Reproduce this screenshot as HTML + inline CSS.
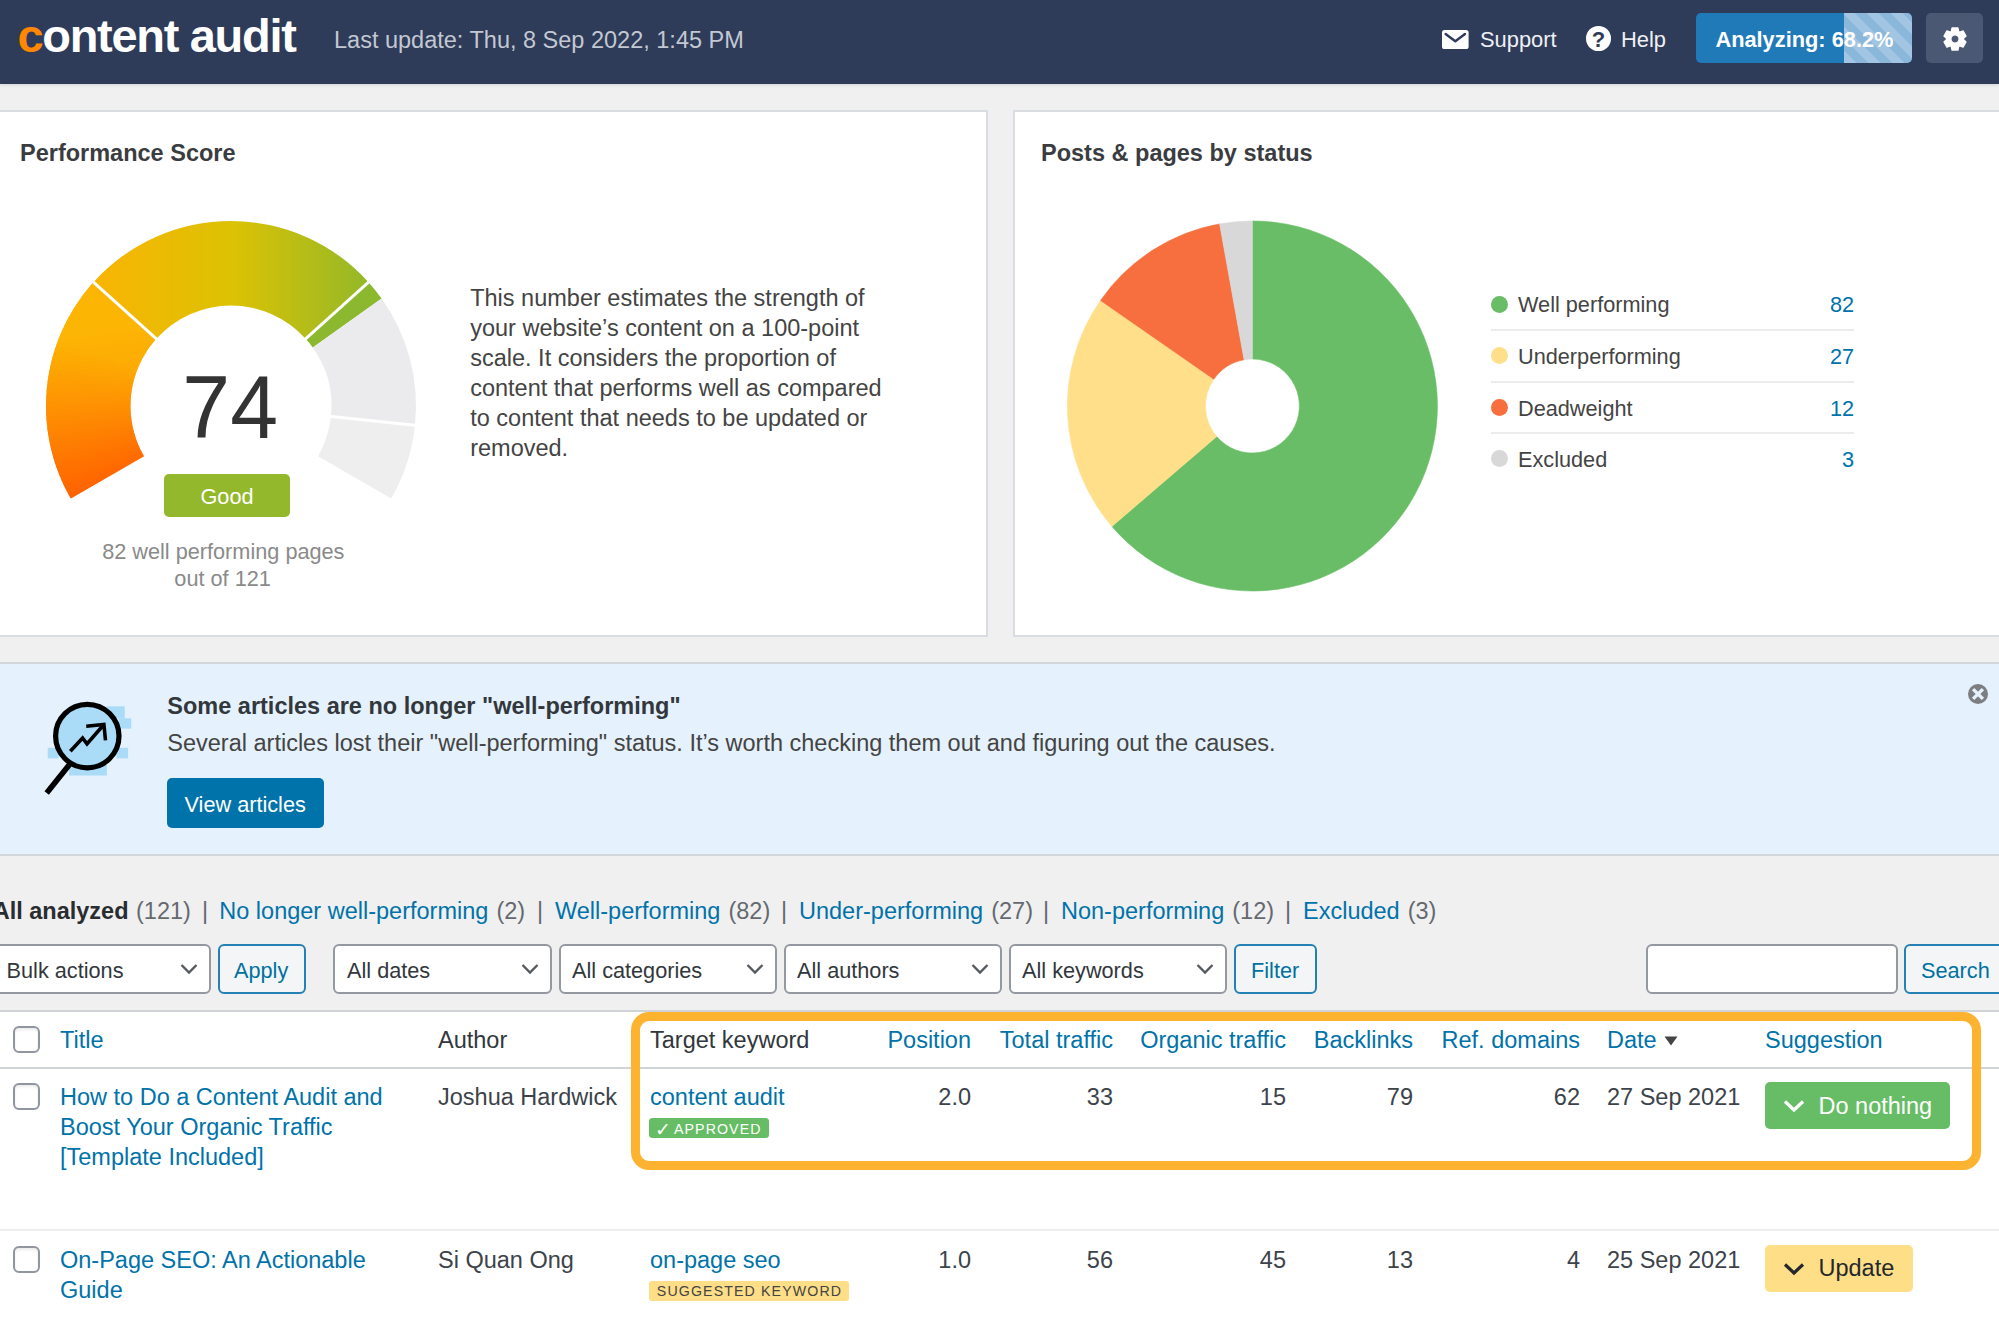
<!DOCTYPE html>
<html lang="en"><head><meta charset="utf-8"><title>Content Audit</title>
<style>
*{box-sizing:border-box;margin:0;padding:0}
html,body{width:1999px;height:1323px;overflow:hidden;background:#f0f0f1}
body{font-family:"Liberation Sans",Arial,Helvetica,sans-serif;position:relative;color:#3c434a}
.t{position:absolute;white-space:nowrap}
.abs{position:absolute}
a{color:#0073aa;text-decoration:none;margin-right:1.5px}
.blue{color:#0073aa}
.card{position:absolute;background:#fff;border:2px solid #d9dce1}
.sel{position:absolute;background:#fff;border:2px solid #9499a1;border-radius:6px;height:50px;top:944px}
.btn{position:absolute;background:#f3f5f6;border:2px solid #2580b3;border-radius:6px;height:50px;top:944px;color:#0071a1}
.cb{position:absolute;width:27px;height:27px;border:2px solid #9095a0;border-radius:6px;background:#fff;left:12.5px;box-shadow:inset 0 2px 3px rgba(0,0,0,.08)}
.hl{position:absolute;height:2px;background:#e2e4e7;left:0;width:1999px}
</style></head><body>
<div class="abs" style="left:0;top:0;width:1999px;height:84px;background:#2e3b59;box-shadow:0 1px 3px rgba(0,0,0,.12)"></div>
<div class="t " style="top:7px;font-size:47px;line-height:57px;color:#fff;font-weight:bold;left:17.40px;letter-spacing:-1.3px;"><span style="color:#ff8800">c</span>ontent audit</div>
<div class="t " style="top:25px;font-size:23.5px;line-height:30px;color:#c3c8d2;left:334.00px;">Last update: Thu, 8 Sep 2022, 1:45 PM</div>
<svg class="abs" style="left:1441.9px;top:29.8px" width="27" height="20" viewBox="0 0 27 20"><rect x="0" y="0" width="26.6" height="19" rx="2.6" fill="#fff"/><path d="M3.6,4 L13.3,11.3 L23,4" fill="none" stroke="#2e3b59" stroke-width="2.4" stroke-linecap="round" stroke-linejoin="round"/></svg>
<div class="t " style="top:25px;font-size:21.9px;line-height:29px;color:#eef0f4;left:1480.00px;">Support</div>
<div class="abs" style="left:1586.2px;top:26.2px;width:24.6px;height:24.6px;border-radius:50%;background:#fff"></div><div class="t " style="top:25px;font-size:22px;line-height:29px;color:#2e3b59;font-weight:bold;left:1098.60px;width:1000px;text-align:center;">?</div>
<div class="t " style="top:25px;font-size:21.9px;line-height:29px;color:#eef0f4;left:1621.00px;">Help</div>
<div class="abs" style="left:1696.4px;top:13px;width:216px;height:50px;border-radius:5px;background:#217ab8;overflow:hidden"><div class="abs" style="left:147.5px;top:0;width:70px;height:50px;background:repeating-linear-gradient(45deg,#a3c5e4 0,#a3c5e4 8.5px,#8bb7da 8.5px,#8bb7da 17px)"></div></div>
<div class="t " style="top:25px;font-size:21.8px;line-height:29px;color:#fff;font-weight:bold;left:1715.40px;">Analyzing: 68.2%</div>
<div class="abs" style="left:1926.2px;top:13px;width:56.5px;height:50px;border-radius:5px;background:#4b5873"></div>
<svg class="abs" style="left:1940.6px;top:24.5px" width="28" height="28" viewBox="-14 -14 28 28"><path fill-rule="evenodd" fill="#fff" d="M-3.68,-7.55 L-2.95,-11.01 L2.95,-11.01 L3.68,-7.55 L4.70,-6.96 L8.06,-8.06 L11.01,-2.95 L8.38,-0.59 L8.38,0.59 L11.01,2.95 L8.06,8.06 L4.70,6.96 L3.68,7.55 L2.95,11.01 L-2.95,11.01 L-3.68,7.55 L-4.70,6.96 L-8.06,8.06 L-11.01,2.95 L-8.38,0.59 L-8.38,-0.59 L-11.01,-2.95 L-8.06,-8.06 L-4.70,-6.96 Z M4.1,0 A4.1,4.1 0 1 0 -4.1,0 A4.1,4.1 0 1 0 4.1,0 Z" stroke="#fff" stroke-width="1.3" stroke-linejoin="round"/></svg>
<div class="card" style="left:-10px;top:110px;width:998px;height:527px"></div>
<div class="card" style="left:1013px;top:110px;width:1000px;height:527px"></div>
<div class="t " style="top:138px;font-size:23.5px;line-height:30px;color:#3a3c3f;font-weight:bold;left:20.00px;">Performance Score</div>
<div class="t " style="top:138px;font-size:23.5px;line-height:30px;color:#3a3c3f;font-weight:bold;left:1041.00px;">Posts &amp; pages by status</div>
<svg class="abs" style="left:0;top:200px" width="460" height="320" viewBox="0 200 460 320"><defs><linearGradient id="g1" gradientUnits="userSpaceOnUse" x1="120" y1="500" x2="95" y2="330"><stop offset="0" stop-color="#ff6200"/><stop offset="1" stop-color="#fdb602"/></linearGradient><linearGradient id="g2" gradientUnits="userSpaceOnUse" x1="95" y1="300" x2="370" y2="300"><stop offset="0" stop-color="#f9b403"/><stop offset="0.5" stop-color="#dcc204"/><stop offset="1" stop-color="#93b829"/></linearGradient></defs><path d="M70.79,498.50 A185,185 0 0 1 67.81,493.14 L142.35,453.34 A100.5,100.5 0 0 0 143.96,456.25 Z" fill="#ff5f00"/><path d="M68.42,494.27 A185,185 0 0 1 65.58,488.84 L141.14,451.00 A100.5,100.5 0 0 0 142.68,453.95 Z" fill="#ff6200"/><path d="M66.16,489.99 A185,185 0 0 1 63.47,484.48 L139.99,448.63 A100.5,100.5 0 0 0 141.45,451.63 Z" fill="#ff6400"/><path d="M64.02,485.64 A185,185 0 0 1 61.47,480.06 L138.91,446.24 A100.5,100.5 0 0 0 140.29,449.27 Z" fill="#ff6701"/><path d="M61.99,481.25 A185,185 0 0 1 59.59,475.60 L137.88,443.81 A100.5,100.5 0 0 0 139.19,446.88 Z" fill="#ff6901"/><path d="M60.08,476.80 A185,185 0 0 1 57.83,471.09 L136.93,441.36 A100.5,100.5 0 0 0 138.15,444.46 Z" fill="#ff6c01"/><path d="M58.29,472.30 A185,185 0 0 1 56.18,466.54 L136.03,438.89 A100.5,100.5 0 0 0 137.18,442.02 Z" fill="#ff6e01"/><path d="M56.61,467.75 A185,185 0 0 1 54.66,461.94 L135.20,436.39 A100.5,100.5 0 0 0 136.26,439.55 Z" fill="#ff7101"/><path d="M55.05,463.17 A185,185 0 0 1 53.26,457.30 L134.44,433.87 A100.5,100.5 0 0 0 135.42,437.06 Z" fill="#ff7301"/><path d="M53.62,458.54 A185,185 0 0 1 51.97,452.63 L133.75,431.33 A100.5,100.5 0 0 0 134.64,434.54 Z" fill="#fe7602"/><path d="M52.30,453.88 A185,185 0 0 1 50.81,447.93 L133.12,428.78 A100.5,100.5 0 0 0 133.92,432.01 Z" fill="#fe7802"/><path d="M51.11,449.19 A185,185 0 0 1 49.78,443.20 L132.55,426.21 A100.5,100.5 0 0 0 133.28,429.46 Z" fill="#fe7b02"/><path d="M50.04,444.46 A185,185 0 0 1 48.87,438.44 L132.06,423.62 A100.5,100.5 0 0 0 132.70,426.90 Z" fill="#fe7d02"/><path d="M49.10,439.71 A185,185 0 0 1 48.08,433.66 L131.63,421.03 A100.5,100.5 0 0 0 132.18,424.31 Z" fill="#fe8002"/><path d="M48.28,434.94 A185,185 0 0 1 47.42,428.87 L131.27,418.42 A100.5,100.5 0 0 0 131.74,421.72 Z" fill="#fe8203"/><path d="M47.58,430.15 A185,185 0 0 1 46.88,424.05 L130.98,415.81 A100.5,100.5 0 0 0 131.36,419.12 Z" fill="#fe8503"/><path d="M47.01,425.34 A185,185 0 0 1 46.47,419.23 L130.76,413.19 A100.5,100.5 0 0 0 131.05,416.51 Z" fill="#fe8703"/><path d="M46.57,420.51 A185,185 0 0 1 46.19,414.39 L130.60,410.56 A100.5,100.5 0 0 0 130.81,413.89 Z" fill="#fe8a03"/><path d="M46.25,415.68 A185,185 0 0 1 46.03,409.55 L130.52,407.93 A100.5,100.5 0 0 0 130.64,411.26 Z" fill="#fe8c03"/><path d="M46.06,410.84 A185,185 0 0 1 46.00,404.71 L130.50,405.30 A100.5,100.5 0 0 0 130.53,408.63 Z" fill="#fe8f03"/><path d="M46.00,406.00 A185,185 0 0 1 46.10,399.87 L130.56,402.67 A100.5,100.5 0 0 0 130.50,406.00 Z" fill="#fe9104"/><path d="M46.06,401.16 A185,185 0 0 1 46.33,395.03 L130.68,400.04 A100.5,100.5 0 0 0 130.53,403.37 Z" fill="#fe9404"/><path d="M46.25,396.32 A185,185 0 0 1 46.68,390.20 L130.87,397.42 A100.5,100.5 0 0 0 130.64,400.74 Z" fill="#fe9604"/><path d="M46.57,391.49 A185,185 0 0 1 47.15,385.38 L131.13,394.80 A100.5,100.5 0 0 0 130.81,398.11 Z" fill="#fe9804"/><path d="M47.01,386.66 A185,185 0 0 1 47.76,380.57 L131.45,392.19 A100.5,100.5 0 0 0 131.05,395.49 Z" fill="#fe9b04"/><path d="M47.58,381.85 A185,185 0 0 1 48.48,375.78 L131.85,389.59 A100.5,100.5 0 0 0 131.36,392.88 Z" fill="#fe9d04"/><path d="M48.28,377.06 A185,185 0 0 1 49.34,371.02 L132.31,387.00 A100.5,100.5 0 0 0 131.74,390.28 Z" fill="#fda005"/><path d="M49.10,372.29 A185,185 0 0 1 50.32,366.27 L132.84,384.42 A100.5,100.5 0 0 0 132.18,387.69 Z" fill="#fda205"/><path d="M50.04,367.54 A185,185 0 0 1 51.42,361.56 L133.44,381.86 A100.5,100.5 0 0 0 132.70,385.10 Z" fill="#fda505"/><path d="M51.11,362.81 A185,185 0 0 1 52.64,356.87 L134.11,379.31 A100.5,100.5 0 0 0 133.28,382.54 Z" fill="#fda705"/><path d="M52.30,358.12 A185,185 0 0 1 53.99,352.22 L134.84,376.78 A100.5,100.5 0 0 0 133.92,379.99 Z" fill="#fdaa05"/><path d="M53.62,353.46 A185,185 0 0 1 55.46,347.60 L135.64,374.28 A100.5,100.5 0 0 0 134.64,377.46 Z" fill="#fdac05"/><path d="M55.05,348.83 A185,185 0 0 1 57.05,343.03 L136.50,371.79 A100.5,100.5 0 0 0 135.42,374.94 Z" fill="#fdaf06"/><path d="M56.61,344.25 A185,185 0 0 1 58.75,338.50 L137.43,369.33 A100.5,100.5 0 0 0 136.26,372.45 Z" fill="#fdb106"/><path d="M58.29,339.70 A185,185 0 0 1 60.58,334.01 L138.42,366.89 A100.5,100.5 0 0 0 137.18,369.98 Z" fill="#fdb406"/><path d="M60.08,335.20 A185,185 0 0 1 62.52,329.58 L139.48,364.48 A100.5,100.5 0 0 0 138.15,367.54 Z" fill="#fdb406"/><path d="M61.99,330.75 A185,185 0 0 1 64.58,325.19 L140.59,362.10 A100.5,100.5 0 0 0 139.19,365.12 Z" fill="#fdb406"/><path d="M64.02,326.36 A185,185 0 0 1 66.75,320.86 L141.77,359.75 A100.5,100.5 0 0 0 140.29,362.73 Z" fill="#fdb406"/><path d="M66.16,322.01 A185,185 0 0 1 69.04,316.59 L143.02,357.43 A100.5,100.5 0 0 0 141.45,360.37 Z" fill="#fdb406"/><path d="M68.42,317.73 A185,185 0 0 1 71.43,312.38 L144.32,355.14 A100.5,100.5 0 0 0 142.68,358.05 Z" fill="#fdb406"/><path d="M70.79,313.50 A185,185 0 0 1 73.94,308.24 L145.68,352.89 A100.5,100.5 0 0 0 143.96,355.75 Z" fill="#fdb406"/><path d="M73.26,309.34 A185,185 0 0 1 76.55,304.16 L147.10,350.68 A100.5,100.5 0 0 0 145.31,353.49 Z" fill="#fdb406"/><path d="M75.85,305.24 A185,185 0 0 1 79.27,300.15 L148.57,348.50 A100.5,100.5 0 0 0 146.71,351.26 Z" fill="#fdb406"/><path d="M78.54,301.21 A185,185 0 0 1 82.09,296.22 L150.11,346.36 A100.5,100.5 0 0 0 148.18,349.08 Z" fill="#fdb406"/><path d="M81.33,297.26 A185,185 0 0 1 85.02,292.36 L151.70,344.26 A100.5,100.5 0 0 0 149.69,346.93 Z" fill="#fdb406"/><path d="M84.23,293.38 A185,185 0 0 1 88.04,288.57 L153.34,342.21 A100.5,100.5 0 0 0 151.27,344.82 Z" fill="#fdb406"/><path d="M87.23,289.58 A185,185 0 0 1 91.17,284.87 L155.04,340.20 A100.5,100.5 0 0 0 152.90,342.75 Z" fill="#fdb406"/><path d="M90.32,285.85 A185,185 0 0 1 93.52,282.21 L156.31,338.75 A100.5,100.5 0 0 0 154.58,340.73 Z" fill="#fdb406"/><path d="M70.79,498.50 A185,185 0 0 1 93.52,282.21 L156.31,338.75 A100.5,100.5 0 0 0 143.96,456.25 Z" fill="url(#g1)" opacity="0.5"/><path d="M93.52,282.21 A185,185 0 0 1 368.48,282.21 L305.69,338.75 A100.5,100.5 0 0 0 156.31,338.75 Z" fill="url(#g2)"/><path d="M368.48,282.21 A185,185 0 0 1 381.57,298.52 L312.80,347.61 A100.5,100.5 0 0 0 305.69,338.75 Z" fill="#8cb82f"/><path d="M381.57,298.52 A185,185 0 0 1 414.99,425.34 L330.95,416.51 A100.5,100.5 0 0 0 312.80,347.61 Z" fill="#ebebed"/><path d="M414.99,425.34 A185,185 0 0 1 391.21,498.50 L318.04,456.25 A100.5,100.5 0 0 0 330.95,416.51 Z" fill="#eeeeee"/><line x1="157.80" y1="340.09" x2="92.03" y2="280.87" stroke="#fff" stroke-width="3"/><line x1="304.20" y1="340.09" x2="369.97" y2="280.87" stroke="#fff" stroke-width="3"/><line x1="328.96" y1="416.30" x2="416.98" y2="425.55" stroke="#fff" stroke-width="3"/></svg>
<div class="t " style="top:358px;font-size:86px;line-height:100px;color:#333;left:-269.80px;width:1000px;text-align:center;transform:scaleY(1.037);transform-origin:50% 80px;">74</div>
<div class="abs" style="left:164px;top:473.5px;width:125.8px;height:43.8px;border-radius:5px;background:#94b82b"></div><div class="t " style="top:482px;font-size:21.7px;line-height:29px;color:#fff;left:-273.00px;width:1000px;text-align:center;">Good</div>
<div class="t " style="top:537px;font-size:21.7px;line-height:29px;color:#8a8a8a;left:-276.70px;width:1000px;text-align:center;">82 well performing pages</div>
<div class="t " style="top:564px;font-size:21.7px;line-height:29px;color:#8a8a8a;left:-277.40px;width:1000px;text-align:center;">out of 121</div>
<div class="t " style="top:283px;font-size:23.5px;line-height:30px;color:#444;left:470.20px;">This number estimates the strength of</div>
<div class="t " style="top:313px;font-size:23.5px;line-height:30px;color:#444;left:470.20px;">your website’s content on a 100-point</div>
<div class="t " style="top:343px;font-size:23.5px;line-height:30px;color:#444;left:470.20px;">scale. It considers the proportion of</div>
<div class="t " style="top:373px;font-size:23.5px;line-height:30px;color:#444;left:470.20px;">content that performs well as compared</div>
<div class="t " style="top:403px;font-size:23.5px;line-height:30px;color:#444;left:470.20px;">to content that needs to be updated or</div>
<div class="t " style="top:433px;font-size:23.5px;line-height:30px;color:#444;left:470.20px;">removed.</div>
<svg class="abs" style="left:1050px;top:200px" width="420" height="420" viewBox="1050 200 420 420"><path d="M1252.40,221.00 A185,185 0 1 1 1111.93,526.39 L1216.71,436.59 A47,47 0 1 0 1252.40,359.00 Z" fill="#68bd66" stroke="#68bd66" stroke-width="0.6"/><path d="M1111.93,526.39 A185,185 0 0 1 1100.49,300.42 L1213.81,379.18 A47,47 0 0 0 1216.71,436.59 Z" fill="#ffdf8a" stroke="#ffdf8a" stroke-width="0.6"/><path d="M1100.49,300.42 A185,185 0 0 1 1219.64,223.92 L1244.08,359.74 A47,47 0 0 0 1213.81,379.18 Z" fill="#f76f3e" stroke="#f76f3e" stroke-width="0.6"/><path d="M1219.64,223.92 A185,185 0 0 1 1252.40,221.00 L1252.40,359.00 A47,47 0 0 0 1244.08,359.74 Z" fill="#d8d8d8" stroke="#d8d8d8" stroke-width="0.6"/></svg>
<div class="abs" style="left:1491px;top:295.5px;width:17px;height:17px;border-radius:50%;background:#68bd66"></div><div class="t " style="top:290px;font-size:21.7px;line-height:29px;color:#444;left:1518.00px;">Well performing</div>
<div class="t " style="top:290px;font-size:21.7px;line-height:29px;color:#0073aa;right:145.00px;text-align:right;">82</div>
<div class="abs" style="left:1491px;top:347.1px;width:17px;height:17px;border-radius:50%;background:#ffdf8a"></div><div class="t " style="top:342px;font-size:21.7px;line-height:29px;color:#444;left:1518.00px;">Underperforming</div>
<div class="t " style="top:342px;font-size:21.7px;line-height:29px;color:#0073aa;right:145.00px;text-align:right;">27</div>
<div class="abs" style="left:1491px;top:398.8px;width:17px;height:17px;border-radius:50%;background:#f76f3e"></div><div class="t " style="top:394px;font-size:21.7px;line-height:29px;color:#444;left:1518.00px;">Deadweight</div>
<div class="t " style="top:394px;font-size:21.7px;line-height:29px;color:#0073aa;right:145.00px;text-align:right;">12</div>
<div class="abs" style="left:1491px;top:450.3px;width:17px;height:17px;border-radius:50%;background:#d8d8d8"></div><div class="t " style="top:445px;font-size:21.7px;line-height:29px;color:#444;left:1518.00px;">Excluded</div>
<div class="t " style="top:445px;font-size:21.7px;line-height:29px;color:#0073aa;right:145.00px;text-align:right;">3</div>
<div class="abs" style="left:1491px;top:329.4px;width:363px;height:1.8px;background:#ebeced"></div><div class="abs" style="left:1491px;top:381px;width:363px;height:1.8px;background:#ebeced"></div><div class="abs" style="left:1491px;top:431.8px;width:363px;height:1.8px;background:#ebeced"></div><div class="abs" style="left:-10px;top:662.3px;width:2020px;height:193.5px;background:#e5f1fc;border:2px solid #d3d7dc"></div>
<svg class="abs" style="left:30px;top:680px" width="120" height="130" viewBox="30 680 120 130"><rect x="106.7" y="706.3" width="18.1" height="12.3" fill="#abdcf7"/><rect x="118.5" y="718.3" width="12.7" height="10.3" fill="#abdcf7"/><rect x="116.5" y="747.8" width="11.6" height="10.6" fill="#abdcf7"/><rect x="47.7" y="747.8" width="10.8" height="10.6" fill="#abdcf7"/><rect x="69.1" y="765" width="37.8" height="10.5" fill="#abdcf7"/><circle cx="87.3" cy="736.1" r="31.7" fill="#abdcf7" stroke="#000" stroke-width="5.2"/><line x1="69.3" y1="764.8" x2="46.7" y2="793" stroke="#000" stroke-width="5.6"/><polyline points="70.3,751.3 82.6,738 87,743.9 103.7,724.7" fill="none" stroke="#000" stroke-width="3.6"/><polyline points="86.2,726.2 103.9,724.4 105.5,740.4" fill="none" stroke="#000" stroke-width="3.6"/></svg>
<div class="t " style="top:691px;font-size:23.5px;line-height:30px;color:#32373c;font-weight:bold;left:167.30px;">Some articles are no longer "well-performing"</div>
<div class="t " style="top:728px;font-size:23.5px;line-height:30px;color:#444;left:167.30px;">Several articles lost their "well-performing" status. It’s worth checking them out and figuring out the causes.</div>
<div class="abs" style="left:167.3px;top:778px;width:156.3px;height:50px;border-radius:5px;background:#0073aa"></div><div class="t " style="top:790px;font-size:21.7px;line-height:29px;color:#fff;left:184.50px;">View articles</div>
<svg class="abs" style="left:1966px;top:681.6px" width="24" height="24" viewBox="-12 -12 24 24"><circle r="10" fill="#7c7e81"/><path d="M-4.9,-4.9 L4.9,4.9 M4.9,-4.9 L-4.9,4.9" stroke="#e5f1fc" stroke-width="3.4"/></svg>
<div class="t " style="top:896px;font-size:23.5px;line-height:30px;color:#2a2d30;font-weight:bold;right:1870.50px;text-align:right;">All analyzed</div>
<div class="t " style="top:896px;font-size:23.5px;line-height:30px;color:#646970;left:136.00px;">(121)</div>
<div class="t " style="top:896px;font-size:23.5px;line-height:30px;color:#646970;left:202.00px;">|</div>
<div class="t " style="top:896px;font-size:23.5px;line-height:30px;color:#646970;left:219.30px;"><a>No longer well-performing</a> (2)</div>
<div class="t " style="top:896px;font-size:23.5px;line-height:30px;color:#646970;left:537.00px;">|</div>
<div class="t " style="top:896px;font-size:23.5px;line-height:30px;color:#646970;left:555.00px;"><a>Well-performing</a> (82)</div>
<div class="t " style="top:896px;font-size:23.5px;line-height:30px;color:#646970;left:781.00px;">|</div>
<div class="t " style="top:896px;font-size:23.5px;line-height:30px;color:#646970;left:799.00px;"><a>Under-performing</a> (27)</div>
<div class="t " style="top:896px;font-size:23.5px;line-height:30px;color:#646970;left:1043.00px;">|</div>
<div class="t " style="top:896px;font-size:23.5px;line-height:30px;color:#646970;left:1061.00px;"><a>Non-performing</a> (12)</div>
<div class="t " style="top:896px;font-size:23.5px;line-height:30px;color:#646970;left:1285.00px;">|</div>
<div class="t " style="top:896px;font-size:23.5px;line-height:30px;color:#646970;left:1303.00px;"><a>Excluded</a> (3)</div>
<div class="sel" style="left:-12px;width:223px"><svg class="abs" style="right:11px;top:17px" width="18" height="12" viewBox="0 0 18 12"><path d="M1.5,2 L9,9.5 L16.5,2" fill="none" stroke="#555a60" stroke-width="2.4"/></svg></div>
<div class="t " style="top:956px;font-size:21.7px;line-height:29px;color:#32373c;left:6.60px;">Bulk actions</div>
<div class="sel" style="left:333px;width:219px"><svg class="abs" style="right:11px;top:17px" width="18" height="12" viewBox="0 0 18 12"><path d="M1.5,2 L9,9.5 L16.5,2" fill="none" stroke="#555a60" stroke-width="2.4"/></svg></div>
<div class="t " style="top:956px;font-size:21.7px;line-height:29px;color:#32373c;left:347.00px;">All dates</div>
<div class="sel" style="left:558.5px;width:218.5px"><svg class="abs" style="right:11px;top:17px" width="18" height="12" viewBox="0 0 18 12"><path d="M1.5,2 L9,9.5 L16.5,2" fill="none" stroke="#555a60" stroke-width="2.4"/></svg></div>
<div class="t " style="top:956px;font-size:21.7px;line-height:29px;color:#32373c;left:572.00px;">All categories</div>
<div class="sel" style="left:783.5px;width:218.5px"><svg class="abs" style="right:11px;top:17px" width="18" height="12" viewBox="0 0 18 12"><path d="M1.5,2 L9,9.5 L16.5,2" fill="none" stroke="#555a60" stroke-width="2.4"/></svg></div>
<div class="t " style="top:956px;font-size:21.7px;line-height:29px;color:#32373c;left:797.00px;">All authors</div>
<div class="sel" style="left:1008.5px;width:218.5px"><svg class="abs" style="right:11px;top:17px" width="18" height="12" viewBox="0 0 18 12"><path d="M1.5,2 L9,9.5 L16.5,2" fill="none" stroke="#555a60" stroke-width="2.4"/></svg></div>
<div class="t " style="top:956px;font-size:21.7px;line-height:29px;color:#32373c;left:1022.00px;">All keywords</div>
<div class="btn" style="left:217.6px;width:88.9px"></div>
<div class="t " style="top:956px;font-size:21.7px;line-height:29px;color:#0071a1;left:234.00px;">Apply</div>
<div class="btn" style="left:1234px;width:82.5px"></div>
<div class="t " style="top:956px;font-size:21.7px;line-height:29px;color:#0071a1;left:1251.00px;">Filter</div>
<div class="sel" style="left:1645.5px;width:252px"></div><div class="btn" style="left:1904px;width:106px"></div>
<div class="t " style="top:956px;font-size:21.7px;line-height:29px;color:#0071a1;left:1921.00px;">Search</div>
<div class="abs" style="left:-10px;top:1010px;width:2020px;height:400px;background:#fff;border:2px solid #d0d3d7"></div>
<div class="hl" style="top:1066.8px;background:#d0d3d7"></div><div class="hl" style="top:1228.6px;background:#eceef0"></div><div class="cb" style="top:1026px"></div><div class="cb" style="top:1083px"></div><div class="cb" style="top:1246px"></div><div class="t " style="top:1025px;font-size:23.5px;line-height:30px;color:#0073aa;left:60.00px;">Title</div>
<div class="t " style="top:1025px;font-size:23.5px;line-height:30px;color:#32373c;left:438.00px;">Author</div>
<div class="t " style="top:1025px;font-size:23.5px;line-height:30px;color:#32373c;left:650.00px;">Target keyword</div>
<div class="t " style="top:1025px;font-size:23.5px;line-height:30px;color:#0073aa;right:1028.00px;text-align:right;">Position</div>
<div class="t " style="top:1025px;font-size:23.5px;line-height:30px;color:#0073aa;right:886.00px;text-align:right;">Total traffic</div>
<div class="t " style="top:1025px;font-size:23.5px;line-height:30px;color:#0073aa;right:713.00px;text-align:right;">Organic traffic</div>
<div class="t " style="top:1025px;font-size:23.5px;line-height:30px;color:#0073aa;right:586.00px;text-align:right;">Backlinks</div>
<div class="t " style="top:1025px;font-size:23.5px;line-height:30px;color:#0073aa;right:419.00px;text-align:right;">Ref. domains</div>
<div class="t " style="top:1025px;font-size:23.5px;line-height:30px;color:#0073aa;left:1607.00px;">Date</div>
<svg class="abs" style="left:1663.5px;top:1036px" width="14" height="10" viewBox="0 0 14 10"><path d="M0.5,0.5 L13.5,0.5 L7,9.5 Z" fill="#444"/></svg><div class="t " style="top:1025px;font-size:23.5px;line-height:30px;color:#0073aa;left:1765.00px;">Suggestion</div>
<div class="t " style="top:1082px;font-size:23.5px;line-height:30px;color:#0073aa;left:60.00px;">How to Do a Content Audit and</div>
<div class="t " style="top:1112px;font-size:23.5px;line-height:30px;color:#0073aa;left:60.00px;">Boost Your Organic Traffic</div>
<div class="t " style="top:1142px;font-size:23.5px;line-height:30px;color:#0073aa;left:60.00px;">[Template Included]</div>
<div class="t " style="top:1082px;font-size:23.5px;line-height:30px;color:#3c434a;left:438.00px;">Joshua Hardwick</div>
<div class="t " style="top:1082px;font-size:23.5px;line-height:30px;color:#0073aa;left:650.00px;">content audit</div>
<div class="t " style="top:1082px;font-size:23.5px;line-height:30px;color:#3c434a;right:1028.00px;text-align:right;">2.0</div>
<div class="t " style="top:1082px;font-size:23.5px;line-height:30px;color:#3c434a;right:886.00px;text-align:right;">33</div>
<div class="t " style="top:1082px;font-size:23.5px;line-height:30px;color:#3c434a;right:713.00px;text-align:right;">15</div>
<div class="t " style="top:1082px;font-size:23.5px;line-height:30px;color:#3c434a;right:586.00px;text-align:right;">79</div>
<div class="t " style="top:1082px;font-size:23.5px;line-height:30px;color:#3c434a;right:419.00px;text-align:right;">62</div>
<div class="t " style="top:1082px;font-size:23.5px;line-height:30px;color:#3c434a;left:1607.00px;">27 Sep 2021</div>
<div class="abs" style="left:649.4px;top:1118.4px;width:119.2px;height:20px;border-radius:3.5px;background:#66bd65"></div><div class="t " style="top:1119px;font-size:14.2px;line-height:20px;color:#fff;left:654.70px;letter-spacing:1.1px;"><span style="font-size:19px;line-height:0;letter-spacing:0;margin-right:-1px;position:relative;top:1.5px">✓</span> APPROVED</div>
<div class="abs" style="left:1765px;top:1082px;width:185px;height:46.5px;border-radius:5px;background:#67bd65"></div><svg class="abs" style="left:1783px;top:1099px" width="22" height="14" viewBox="0 0 22 14"><path d="M2,2.5 L11,11 L20,2.5" fill="none" stroke="#fff" stroke-width="3.2"/></svg><div class="t " style="top:1091px;font-size:23.5px;line-height:30px;color:#fff;left:1818.50px;">Do nothing</div>
<div class="t " style="top:1245px;font-size:23.5px;line-height:30px;color:#0073aa;left:60.00px;">On-Page SEO: An Actionable</div>
<div class="t " style="top:1275px;font-size:23.5px;line-height:30px;color:#0073aa;left:60.00px;">Guide</div>
<div class="t " style="top:1245px;font-size:23.5px;line-height:30px;color:#3c434a;left:438.00px;">Si Quan Ong</div>
<div class="t " style="top:1245px;font-size:23.5px;line-height:30px;color:#0073aa;left:650.00px;">on-page seo</div>
<div class="t " style="top:1245px;font-size:23.5px;line-height:30px;color:#3c434a;right:1028.00px;text-align:right;">1.0</div>
<div class="t " style="top:1245px;font-size:23.5px;line-height:30px;color:#3c434a;right:886.00px;text-align:right;">56</div>
<div class="t " style="top:1245px;font-size:23.5px;line-height:30px;color:#3c434a;right:713.00px;text-align:right;">45</div>
<div class="t " style="top:1245px;font-size:23.5px;line-height:30px;color:#3c434a;right:586.00px;text-align:right;">13</div>
<div class="t " style="top:1245px;font-size:23.5px;line-height:30px;color:#3c434a;right:419.00px;text-align:right;">4</div>
<div class="t " style="top:1245px;font-size:23.5px;line-height:30px;color:#3c434a;left:1607.00px;">25 Sep 2021</div>
<div class="abs" style="left:649.4px;top:1281.2px;width:199.6px;height:19.8px;border-radius:3px;background:#ffde88"></div><div class="t " style="top:1281px;font-size:14.2px;line-height:20px;color:#444;left:656.80px;letter-spacing:1.12px;">SUGGESTED KEYWORD</div>
<div class="abs" style="left:1765px;top:1245px;width:147.5px;height:46.5px;border-radius:5px;background:#ffde88"></div><svg class="abs" style="left:1783px;top:1262px" width="22" height="14" viewBox="0 0 22 14"><path d="M2,2.5 L11,11 L20,2.5" fill="none" stroke="#23282d" stroke-width="3.2"/></svg><div class="t " style="top:1253px;font-size:23.5px;line-height:30px;color:#23282d;left:1818.50px;">Update</div>
<div class="abs" style="left:630.5px;top:1012.3px;width:1350.5px;height:157.5px;border:9.5px solid #fdb32f;border-radius:18px"></div>
</body></html>
